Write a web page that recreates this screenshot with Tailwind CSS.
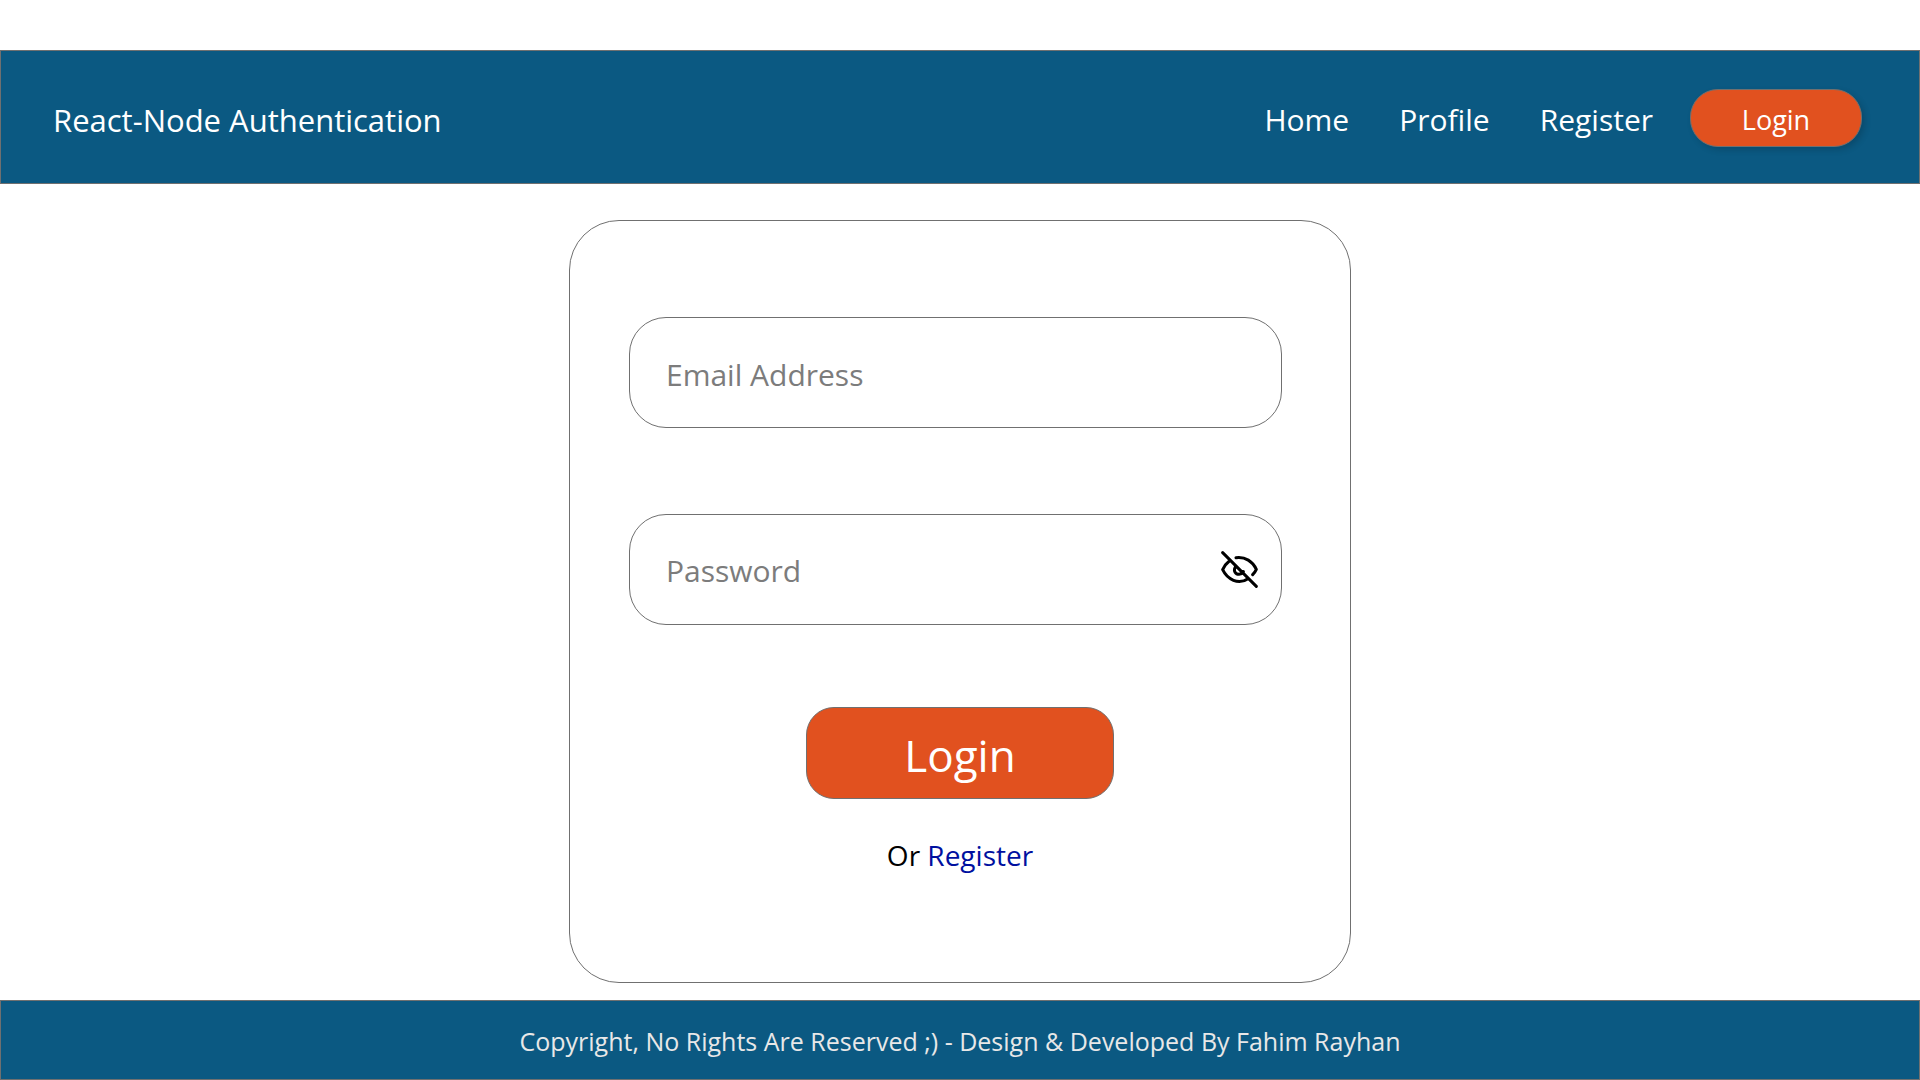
<!DOCTYPE html>
<html lang="en">
<head>
<meta charset="utf-8">
<meta name="viewport" content="width=device-width, initial-scale=1">
<title>React-Node Authentication</title>
<script src="https://cdn.jsdelivr.net/npm/@tailwindcss/browser@4"></script>
</head>
<body class="flex min-h-screen flex-col bg-white pt-[50px] font-['Segoe_UI','Open_Sans',sans-serif]">
<header class="flex flex-wrap items-center justify-between border border-[#707070] bg-[#0b5982] pt-[38px] pr-[57px] pb-9 pl-[52px] text-white">
  <a href="#" class="pt-1 text-[31px] leading-[44px]">React-Node Authentication</a>
  <nav class="flex flex-wrap items-center text-[30px] leading-[44px]">
    <a href="#" class="mr-[50px] pt-1">Home</a>
    <a href="#" class="mr-[50px] pt-1">Profile</a>
    <a href="#" class="mr-[37px] pt-1">Register</a>
    <button type="button" class="h-[58px] w-[172px] rounded-[28px] border border-[#707070] bg-[#e1511f] pt-[3px] text-[27px] leading-9 shadow-[3px_3px_6px_rgba(0,0,0,0.16)]">Login</button>
  </nav>
</header>
<main class="flex grow justify-center px-4 pt-9 pb-[17px]">
  <form class="flex w-full max-w-[782px] flex-col rounded-[50px] border border-[#707070] px-[59px] pt-24 pb-[104px]">
    <input type="email" aria-label="Email Address" placeholder="Email Address" class="h-[111px] w-full max-w-[653px] rounded-[37px] border border-[#707070] px-9 pt-[3px] text-[30px] leading-[44px] placeholder:text-[#7c7c7c]">
    <div class="mt-[86px] flex h-[111px] w-full max-w-[653px] items-center rounded-[37px] border border-[#707070] pr-[23px] pl-9">
      <input type="password" aria-label="Password" placeholder="Password" class="min-w-0 grow pt-[3px] text-[30px] leading-[44px] outline-none placeholder:text-[#7c7c7c]">
      <button type="button" aria-label="Show password">
        <svg class="block size-[37px]" viewBox="213 183 111 111" fill="none" stroke="#000" stroke-width="9" stroke-linecap="round" stroke-linejoin="round">
          <path d="M218 188 319 289M258 203C286 199 308 215 319 238Q315 247 308 254M238 213Q225 223 218 239C232 268 265 286 294 266M256 231C249 243 257 253 267 253Q276 252 280 245"/>
        </svg>
      </button>
    </div>
    <button type="submit" class="mt-[82px] h-[92px] w-[308px] self-center rounded-[28px] border border-[#707070] bg-[#e1511f] pt-1 text-[44px] leading-[60px] text-white">Login</button>
    <p class="mt-9 text-center text-[28px] leading-[40px] text-black">Or <a href="#" class="text-[#00109f]">Register</a></p>
  </form>
</main>
<footer class="border border-[#707070] bg-[#0b5982] pt-[22px] pb-5 text-center text-[25px] leading-9 text-[#e8e8e8]">Copyright, No Rights Are Reserved ;) - Design &amp; Developed By Fahim Rayhan</footer>
</body>
</html>
